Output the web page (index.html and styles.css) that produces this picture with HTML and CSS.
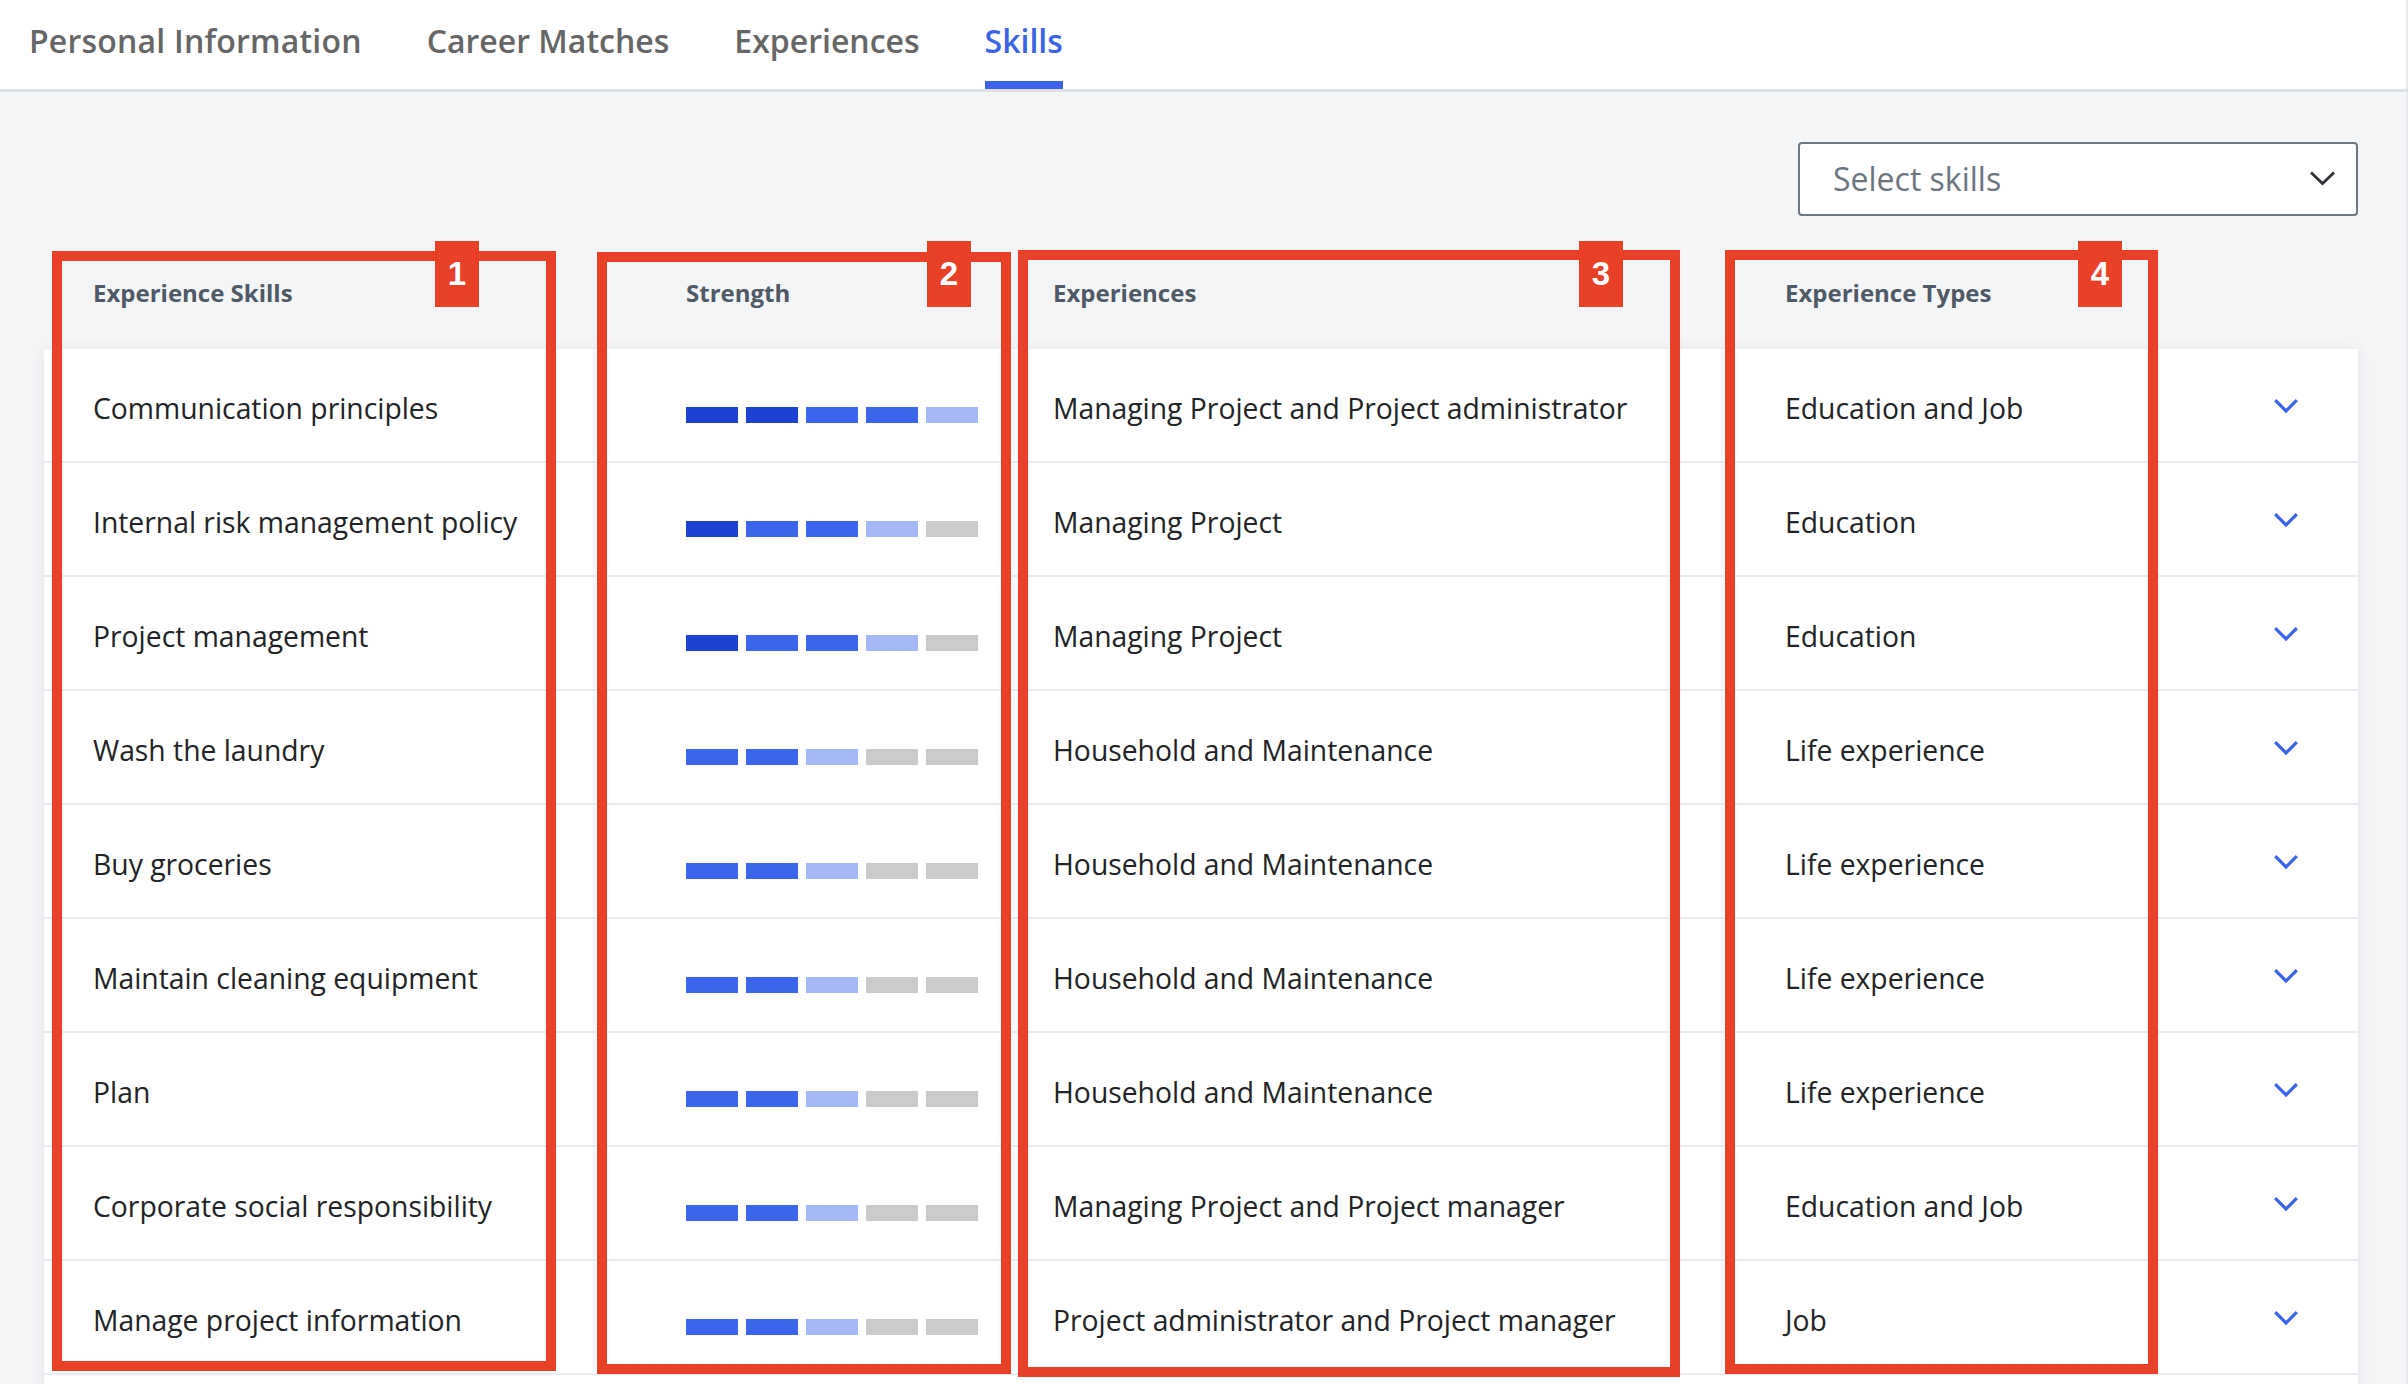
FILE: index.html
```html
<!DOCTYPE html>
<html lang="en">
<head>
<meta charset="utf-8">
<title>Skills</title>
<link rel="stylesheet" href="styles.css">
</head>
<body>
<div class="page">
  <nav class="tabs">
    <a class="tab">Personal Information</a>
    <a class="tab">Career Matches</a>
    <a class="tab">Experiences</a>
    <a class="tab active">Skills</a>
  </nav>

  <main class="content">
    <div class="toolbar">
      <div class="select">
        <span class="select-placeholder">Select skills</span>
        <svg class="select-chevron" width="27" height="16" viewBox="0 0 27 16"><path d="M2 2.5 L13.5 13.5 L25 2.5" fill="none" stroke="#2f3338" stroke-width="2.8"/></svg>
      </div>
    </div>

    <div class="table">
      <div class="grid thead">
        <div class="th">Experience Skills</div>
        <div class="th">Strength</div>
        <div class="th">Experiences</div>
        <div class="th">Experience Types</div>
        <div></div>
      </div>

      <div class="tbody">
        <div class="grid tr">
          <div class="td">Communication principles</div>
          <div class="bars"><i class="b dark"></i><i class="b dark"></i><i class="b mid"></i><i class="b mid"></i><i class="b light"></i></div>
          <div class="td">Managing Project and Project administrator</div>
          <div class="td">Education and Job</div>
          <svg class="chev" width="26" height="16" viewBox="0 0 26 16"><path d="M2.2 2.2 L13 13 L23.8 2.2" fill="none" stroke="#3b63ea" stroke-width="3.2"/></svg>
        </div>
        <div class="grid tr">
          <div class="td">Internal risk management policy</div>
          <div class="bars"><i class="b dark"></i><i class="b mid"></i><i class="b mid"></i><i class="b light"></i><i class="b off"></i></div>
          <div class="td">Managing Project</div>
          <div class="td">Education</div>
          <svg class="chev" width="26" height="16" viewBox="0 0 26 16"><path d="M2.2 2.2 L13 13 L23.8 2.2" fill="none" stroke="#3b63ea" stroke-width="3.2"/></svg>
        </div>
        <div class="grid tr">
          <div class="td">Project management</div>
          <div class="bars"><i class="b dark"></i><i class="b mid"></i><i class="b mid"></i><i class="b light"></i><i class="b off"></i></div>
          <div class="td">Managing Project</div>
          <div class="td">Education</div>
          <svg class="chev" width="26" height="16" viewBox="0 0 26 16"><path d="M2.2 2.2 L13 13 L23.8 2.2" fill="none" stroke="#3b63ea" stroke-width="3.2"/></svg>
        </div>
        <div class="grid tr">
          <div class="td">Wash the laundry</div>
          <div class="bars"><i class="b mid"></i><i class="b mid"></i><i class="b light"></i><i class="b off"></i><i class="b off"></i></div>
          <div class="td">Household and Maintenance</div>
          <div class="td">Life experience</div>
          <svg class="chev" width="26" height="16" viewBox="0 0 26 16"><path d="M2.2 2.2 L13 13 L23.8 2.2" fill="none" stroke="#3b63ea" stroke-width="3.2"/></svg>
        </div>
        <div class="grid tr">
          <div class="td">Buy groceries</div>
          <div class="bars"><i class="b mid"></i><i class="b mid"></i><i class="b light"></i><i class="b off"></i><i class="b off"></i></div>
          <div class="td">Household and Maintenance</div>
          <div class="td">Life experience</div>
          <svg class="chev" width="26" height="16" viewBox="0 0 26 16"><path d="M2.2 2.2 L13 13 L23.8 2.2" fill="none" stroke="#3b63ea" stroke-width="3.2"/></svg>
        </div>
        <div class="grid tr">
          <div class="td">Maintain cleaning equipment</div>
          <div class="bars"><i class="b mid"></i><i class="b mid"></i><i class="b light"></i><i class="b off"></i><i class="b off"></i></div>
          <div class="td">Household and Maintenance</div>
          <div class="td">Life experience</div>
          <svg class="chev" width="26" height="16" viewBox="0 0 26 16"><path d="M2.2 2.2 L13 13 L23.8 2.2" fill="none" stroke="#3b63ea" stroke-width="3.2"/></svg>
        </div>
        <div class="grid tr">
          <div class="td">Plan</div>
          <div class="bars"><i class="b mid"></i><i class="b mid"></i><i class="b light"></i><i class="b off"></i><i class="b off"></i></div>
          <div class="td">Household and Maintenance</div>
          <div class="td">Life experience</div>
          <svg class="chev" width="26" height="16" viewBox="0 0 26 16"><path d="M2.2 2.2 L13 13 L23.8 2.2" fill="none" stroke="#3b63ea" stroke-width="3.2"/></svg>
        </div>
        <div class="grid tr">
          <div class="td">Corporate social responsibility</div>
          <div class="bars"><i class="b mid"></i><i class="b mid"></i><i class="b light"></i><i class="b off"></i><i class="b off"></i></div>
          <div class="td">Managing Project and Project manager</div>
          <div class="td">Education and Job</div>
          <svg class="chev" width="26" height="16" viewBox="0 0 26 16"><path d="M2.2 2.2 L13 13 L23.8 2.2" fill="none" stroke="#3b63ea" stroke-width="3.2"/></svg>
        </div>
        <div class="grid tr">
          <div class="td">Manage project information</div>
          <div class="bars"><i class="b mid"></i><i class="b mid"></i><i class="b light"></i><i class="b off"></i><i class="b off"></i></div>
          <div class="td">Project administrator and Project manager</div>
          <div class="td">Job</div>
          <svg class="chev" width="26" height="16" viewBox="0 0 26 16"><path d="M2.2 2.2 L13 13 L23.8 2.2" fill="none" stroke="#3b63ea" stroke-width="3.2"/></svg>
        </div>
        <div class="grid tr tr-empty"></div>
      </div>
    </div>
  </main>

  <div class="annotations">
    <div class="mark mark-1"><span class="badge">1</span></div>
    <div class="mark mark-2"><span class="badge">2</span></div>
    <div class="mark mark-3"><span class="badge">3</span></div>
    <div class="mark mark-4"><span class="badge">4</span></div>
  </div>
</div>
</body>
</html>
```

FILE: styles.css
```css
* { box-sizing: border-box; }

html, body {
  margin: 0;
  padding: 0;
}

body {
  background: #f4f5f7;
  font-family: "Open Sans", "Noto Sans", sans-serif;
  overflow: hidden;
}

.page {
  position: relative;
  width: 2408px;
  min-height: 1384px;
  box-shadow: inset -2px 0 0 #e6e8ec;
}

/* Tabs */
.tabs {
  display: flex;
  gap: 65px;
  padding-left: 29px;
  background: #ffffff;
  border-bottom: 3px solid #dcdfe5;
  box-shadow: inset -2px 0 0 #e6e8ec;
}

.tab {
  display: block;
  font-size: 32px;
  font-weight: 600;
  line-height: 44px;
  color: #666666;
  padding: 19px 0 18px;
  border-bottom: 8px solid transparent;
  cursor: pointer;
}

.tab:first-child {
  letter-spacing: 0.2px;
}

.tab.active {
  color: #3a63e8;
  border-bottom-color: #3a63e8;
}

/* Content */
.content {
  padding: 50px 50px 0 44px;
}

.toolbar {
  display: flex;
  justify-content: flex-end;
}

.select {
  width: 560px;
  height: 74px;
  display: flex;
  align-items: center;
  justify-content: space-between;
  padding: 0 20px 0 33px;
  background: #ffffff;
  border: 2px solid #6f7780;
  border-radius: 4px;
}

.select-placeholder {
  font-size: 32px;
  line-height: 44px;
  color: #6c757d;
}

.select-chevron {
  display: block;
  margin-top: -2px;
}

/* Table */
.table {
  width: 2314px;
}

.grid {
  display: grid;
  grid-template-columns: 593px 367px 732px 1fr 26px;
  padding: 0 59px 0 49px;
}

.thead {
  height: 133px;
  padding-top: 60px;
  align-items: start;
}

.th {
  font-size: 24px;
  font-weight: 700;
  line-height: 33px;
  color: #4f5a66;
}

.tbody {
  background: #ffffff;
  box-shadow: 0 2px 12px rgba(30, 40, 60, 0.09);
}

.tr {
  height: 114px;
  padding-top: 5px;
  align-items: center;
  border-bottom: 2px solid #e8ecf0;
}

.tr-empty {
  height: 60px;
}

.td {
  font-size: 28.3px;
  line-height: 38px;
  color: #212325;
  white-space: nowrap;
}

.bars {
  display: flex;
  gap: 8px;
  height: 16px;
  margin-top: 15px;
}

.b {
  display: block;
  width: 52px;
  height: 16px;
}

.b.dark { background: #1d42d2; }
.b.mid { background: #3b65ed; }
.b.light { background: #a3b8f5; }
.b.off { background: #cbcbcb; }

.chev {
  display: block;
  margin-top: -3px;
}

/* Annotation overlay */
.annotations {
  position: absolute;
  inset: 0;
  pointer-events: none;
}

.mark {
  position: absolute;
  border: 10px solid #e94128;
}

.mark-1 { left: 52px; top: 251px; width: 504px; height: 1120px; }
.mark-2 { left: 597px; top: 252px; width: 414px; height: 1122px; }
.mark-3 { left: 1018px; top: 250px; width: 662px; height: 1127px; }
.mark-4 { left: 1725px; top: 250px; width: 433px; height: 1124px; }

.badge {
  position: absolute;
  top: -20px;
  width: 44px;
  height: 66px;
  background: #e94128;
  color: #ffffff;
  font-family: "Liberation Sans", Arial, sans-serif;
  font-weight: 700;
  font-size: 33px;
  line-height: 66px;
  text-align: center;
}

.mark-1 .badge { left: 373px; top: -20px; }
.mark-2 .badge { left: 320px; top: -21px; }
.mark-3 .badge { left: 551px; top: -19px; }
.mark-4 .badge { left: 343px; top: -19px; }
```
